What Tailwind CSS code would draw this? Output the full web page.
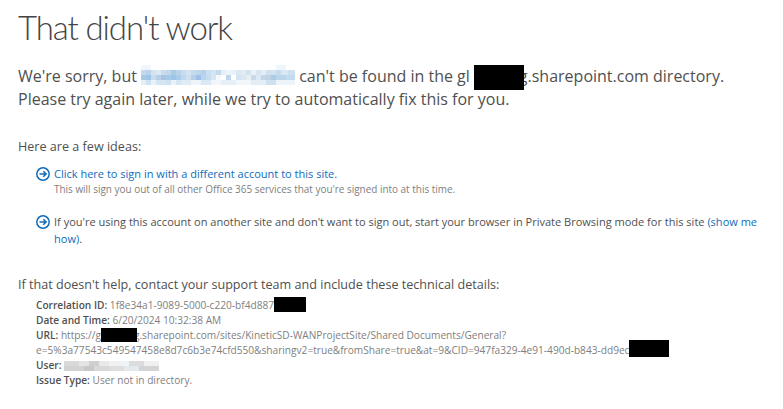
<!DOCTYPE html>
<html lang="en">
<head>
  <meta charset="UTF-8" />
  <script src="https://cdn.jsdelivr.net/npm/@tailwindcss/browser@4"></script>
  <title>That didn't work</title>
</head>
<body class="bg-white h-[409px] overflow-hidden font-['Open_Sans','Noto_Sans',sans-serif] text-[#505050]">
  <div class="pl-[18px] pt-[7px]">
    <h1 class="text-[33px] leading-[40px] font-light tracking-[-1.1px] text-[#444] font-['Lato',sans-serif]">That didn't work</h1>

    <p class="mt-[18px] text-[16px] leading-[23px] w-[760px]">
      We're sorry, but <span class="relative inline-block w-[154px]"><span class="absolute left-0 bottom-[-3px] w-[154px] flex flex-col">
        <span class="h-[5px] bg-[linear-gradient(90deg,#f0f6fb_0_10px,#fff_0_135px,#eef5fb_0_145px,#fff_0_154px)]"></span>
        <span class="h-[5px] bg-[linear-gradient(90deg,#c5d9ea_0_5px,#b9d3ea_0_10px,#d4e3f0_0_15px,#dce9f3_0_20px,#c9dcee_0_25px,#c3d6ea_0_30px,#a9cbe8_0_35px,#b8d3ea_0_40px,#c8dcee_0_45px,#d3e3f1_0_50px,#c4daed_0_55px,#bcd6ec_0_60px,#b5d2ea_0_65px,#c9e0f2_0_70px,#d4e4f1_0_75px,#c2daed_0_80px,#e5eff7_0_85px,#eef5fa_0_90px,#e8f1f8_0_95px,#dbe8f3_0_100px,#e0ebf4_0_105px,#d2e3f0_0_110px,#e9f1f7_0_115px,#d8e5f1_0_120px,#e3eef6_0_125px,#cfe1ef_0_130px,#d0e3f1_0_135px,#c6dcee_0_140px,#dbe8f3_0_147px,#cfe1ef_0_154px)]"></span>
        <span class="h-[5px] bg-[linear-gradient(90deg,#a9c8e4_0_5px,#9fc6e8_0_10px,#c8dcee_0_15px,#b8cfe6_0_20px,#a8c3e2_0_25px,#a5c9e8_0_30px,#9dc4e6_0_35px,#a8cce9_0_40px,#c0d8ec_0_45px,#cfe0ef_0_50px,#b5cfe8_0_55px,#9dc0e4_0_60px,#b5d6ee_0_65px,#c5dcee_0_70px,#d8e6f2_0_75px,#f5f9fc_0_80px,#fff_0_85px,#c0d7ea_0_90px,#fff_0_95px,#d5e4f0_0_100px,#dbe8f2_0_105px,#e6eff6_0_110px,#c9d9e9_0_115px,#dbe8f3_0_120px,#c2d6e9_0_125px,#c0d3e6_0_130px,#afcae4_0_135px,#b9d5ec_0_145px,#c3dbee_0_154px)]"></span>
        <span class="h-[5px] bg-[linear-gradient(90deg,#e6eff6_0_5px,#cfe2f1_0_10px,#eaf2f8_0_15px,#d4e5f3_0_25px,#cde1f1_0_30px,#e9f2f8_0_35px,#d5e5f2_0_40px,#e0ebf4_0_50px,#eef4f9_0_60px,#dce9f4_0_70px,#f0f6fa_0_80px,#e6eff6_0_95px,#f2f7fb_0_110px,#e4eef6_0_125px,#cee1f1_0_135px,#edf4f9_0_154px)]"></span>
      </span></span> can't be found in the gl<span class="relative inline-block w-[45px] ml-[4px]"><span class="absolute left-0 bottom-[-8px] w-[50px] h-[25px] bg-black z-10"></span></span>g.sharepoint.com directory.<br />
      Please try again later, while we try to automatically fix this for you.
    </p>

    <p class="mt-[27px] text-[12.6px] leading-[18px]">Here are a few ideas:</p>

    <div class="mt-[9px] pl-[18px] flex gap-[4px]">
      <svg class="w-[14px] h-[14px] mt-[2px] shrink-0 text-[#0f6cbd]" viewBox="0 0 14 14" fill="none" stroke="currentColor"><circle cx="7" cy="7" r="6.200" stroke-width="1.500" /><path d="M3.500 7h6.500M7.300 4.200 10.100 7l-2.800 2.800" stroke-width="1.500" /></svg>
      <div>
        <a class="block text-[11.03px] leading-[17px] text-[#0f6cbd]">Click here to sign in with a different account to this site.</a>
        <p class="text-[9.950px] leading-[15px] text-[#808080]">This will sign you out of all other Office 365 services that you're signed into at this time.</p>
      </div>
    </div>

    <div class="mt-[16px] pl-[18px] flex gap-[4px] w-[758px]">
      <svg class="w-[14px] h-[14px] mt-[2px] shrink-0 text-[#0f6cbd]" viewBox="0 0 14 14" fill="none" stroke="currentColor"><circle cx="7" cy="7" r="6.200" stroke-width="1.500" /><path d="M3.500 7h6.500M7.300 4.200 10.100 7l-2.800 2.800" stroke-width="1.500" /></svg>
      <p class="text-[11.03px] leading-[17px]">If you're using this account on another site and don't want to sign out, start your browser in Private Browsing mode for this site <a class="text-[#0f6cbd]">(show me</a><br /><a class="text-[#0f6cbd]">how)</a>.</p>
    </div>

    <p class="mt-[29px] text-[12.6px] leading-[18px]">If that doesn't help, contact your support team and include these technical details:</p>

    <div class="mt-[4px] pl-[18px] text-[10.150px] leading-[15px] text-[#808080]">
      <p><b class="font-semibold text-[#505050]">Correlation ID:</b> 1f8e34a1-9089-5000-c220-bf4d887<span class="relative inline-block w-[32px]"><span class="absolute left-0 bottom-[-3px] w-[32px] h-[15px] bg-black"></span></span></p>
      <p><b class="font-semibold text-[#505050]">Date and Time:</b> 6/20/2024 10:32:38 AM</p>
      <p><b class="font-semibold text-[#505050]">URL:</b> https://g<span class="relative inline-block w-[33px]"><span class="absolute left-0 bottom-[-3px] w-[36px] h-[14px] bg-black z-10"></span></span>g.sharepoint.com/sites/KineticSD-WANProjectSite/Shared Documents/General?</p>
      <p>e=5%3a77543c549547458e8d7c6b3e74cfd550&amp;sharingv2=true&amp;fromShare=true&amp;at=9&amp;CID=947fa329-4e91-490d-b843-dd9ec<span class="relative inline-block w-[40px]"><span class="absolute left-0 bottom-[-3px] w-[40px] h-[17px] bg-black"></span></span></p>
      <p><b class="font-semibold text-[#505050]">User:</b> <span class="relative inline-block w-[95px]"><span class="absolute left-0 bottom-[-2px] w-[95px] flex flex-col">
        <span class="h-[5px] bg-[linear-gradient(90deg,#d9d9d9_0_15px,#e4e4e4_0_25px,#cfcfcf_0_35px,#e8e8e8_0_45px,#f1f1f1_0_55px,#eef3f6_0_65px,#dcdcdc_0_80px,#f0f0f0_0_95px)]"></span>
        <span class="h-[5px] bg-[linear-gradient(90deg,#d2d2d2_0_20px,#c8c8c8_0_30px,#d8d8d8_0_45px,#dedede_0_60px,#e3e9ee_0_75px,#d4d4d4_0_95px)]"></span>
      </span></span></p>
      <p><b class="font-semibold text-[#505050]">Issue Type:</b> User not in directory.</p>
    </div>
  </div>
</body>
</html>
